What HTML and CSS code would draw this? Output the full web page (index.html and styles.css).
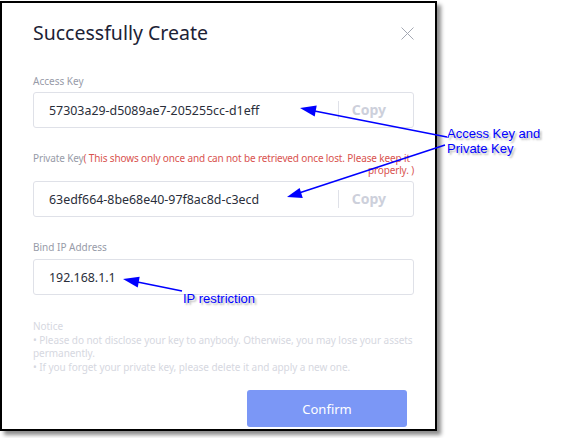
FILE: index.html
```html
<!DOCTYPE html>
<html>
<head>
<meta charset="utf-8">
<link rel="stylesheet" href="styles.css">
</head>
<body>
<div class="stage">
  <div class="dialog">
    <div class="header">
      <h1 class="title">Successfully Create</h1>
      <svg class="close" width="13" height="13" viewBox="0 0 13 13"><path d="M0.5 0.5L12.5 12.5M12.5 0.5L0.5 12.5" stroke="#a4a8b3" stroke-width="1" fill="none"/></svg>
    </div>
    <div class="field f1">
      <div class="label">Access Key</div>
      <div class="input">
        <span class="value">57303a29-d5089ae7-205255cc-d1eff</span>
        <span class="copy">Copy</span>
      </div>
    </div>
    <div class="field f2">
      <div class="label label-wrap">Private Key<span class="warn">( This shows only once and can not be retrieved once lost. Please keep it properly. )</span></div>
      <div class="input">
        <span class="value">63edf664-8be68e40-97f8ac8d-c3ecd</span>
        <span class="copy">Copy</span>
      </div>
    </div>
    <div class="field f3">
      <div class="label">Bind IP Address</div>
      <div class="input">
        <span class="value">192.168.1.1</span>
      </div>
    </div>
    <div class="notice">
      <div>Notice</div>
      <div>• Please do not disclose your key to anybody. Otherwise, you may lose your assets permanently.</div>
      <div>• If you forget your private key, please delete it and apply a new one.</div>
    </div>
    <div class="footer">
      <button class="confirm">Confirm</button>
    </div>
  </div>

  <svg class="arrows" width="571" height="438" viewBox="0 0 571 438">
    <g stroke="#0000ff" stroke-width="1.5" fill="none">
      <line x1="447" y1="137" x2="312" y2="110.5"/>
      <line x1="445" y1="145" x2="299" y2="193"/>
      <line x1="182" y1="291" x2="135" y2="281.5"/>
    </g>
    <g fill="#0000ff">
      <polygon points="300,108 316.7,105.6 314.7,116.4"/>
      <polygon points="287,197 302.8,197.9 299.6,187.9"/>
      <polygon points="123,279 139.7,276.8 137.7,287.4"/>
    </g>
  </svg>
  <div class="note note-keys">Access Key and<br>Private Key</div>
  <div class="note note-ip">IP restriction</div>
</div>
</body>
</html>
```
FILE: styles.css
```css
html, body {
  margin: 0;
  padding: 0;
  background: #ffffff;
}
body {
  font-family: "Noto Sans", "Open Sans", sans-serif;
}
.stage {
  position: relative;
  width: 571px;
  height: 438px;
  overflow: hidden;
  padding-top: 1px;
  box-sizing: border-box;
}
.dialog {
  box-sizing: border-box;
  width: 437px;
  height: 430px;
  border: 2px solid #000;
  background: #fff;
  box-shadow: 4px 4px 4px rgba(0, 0, 0, 0.45);
  padding: 16px 21px 0 31px;
  display: flex;
  flex-direction: column;
}
.header {
  display: flex;
  align-items: center;
  justify-content: space-between;
  height: 28px;
}
.title {
  margin: 0;
  font-weight: 400;
  font-size: 19.5px;
  line-height: 28px;
  color: #1c2235;
}
.close {
  display: block;
  margin-top: 0;
}
.field {
  display: flex;
  flex-direction: column;
}
.f1 { margin-top: 27px; }
.f2 { margin-top: 24px; }
.f3 { margin-top: 23px; }
.label {
  font-size: 10px;
  line-height: 15px;
  color: #979ba8;
  margin-bottom: 3px;
}
.f3 .label { margin-bottom: 4px; }
.label-wrap {
  line-height: 12px;
  letter-spacing: -0.14px;
  text-align: left;
  text-align-last: right;
  margin-bottom: 5px;
}
.warn {
  color: #d9534f;
}
.input {
  box-sizing: border-box;
  height: 36px;
  border: 1px solid #dfe1e8;
  border-radius: 3px;
  display: flex;
  align-items: center;
  padding-left: 15px;
}
.value {
  flex: 1;
  font-size: 12.4px;
  color: #2a2e3a;
}
.copy {
  border-left: 1px solid #dfe1e8;
  height: 18px;
  line-height: 18px;
  padding: 0 27px 0 13px;
  font-size: 14px;
  font-weight: 700;
  color: #cdd0db;
}
.notice {
  margin-top: 25px;
  font-size: 10px;
  letter-spacing: -0.05px;
  line-height: 13.5px;
  color: #d6d8df;
}
.footer {
  display: flex;
  justify-content: flex-end;
  margin-top: 16px;
  padding-right: 7px;
}
.confirm {
  width: 160px;
  height: 37px;
  border: none;
  border-radius: 3px;
  background: #7b97f6;
  color: #fff;
  font-family: "Noto Sans", sans-serif;
  font-size: 13px;
}
.arrows {
  position: absolute;
  left: 0;
  top: 0;
}
.note {
  position: absolute;
  font-family: "Liberation Sans", Arial, sans-serif;
  font-size: 13px;
  line-height: 15px;
  color: #0000ff;
  text-shadow: 2px 2px 2px rgba(0, 0, 0, 0.3);
}
.note-keys { left: 447px; top: 126px; }
.note-ip { left: 183px; top: 291px; }
```
